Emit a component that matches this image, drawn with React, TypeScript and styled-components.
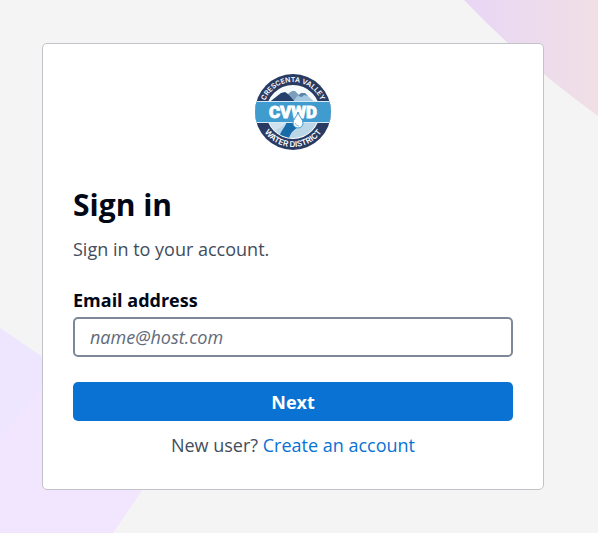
import React from "react";
import styled, { createGlobalStyle } from "styled-components";

const GlobalStyle = createGlobalStyle`
  *, *::before, *::after { box-sizing: border-box; }
  body {
    margin: 0;
    background: #f4f4f4;
    color: #414d5c;
    font-family: "Open Sans", "Noto Sans", sans-serif;
    font-size: 18px;
    line-height: 25px;
  }
`;

const Page = styled.div`
  position: relative;
  display: flex;
  justify-content: center;
  align-items: flex-start;
  min-height: 100vh;
  padding: 43px 54px 43px 42px;
  overflow: hidden;
`;

const Backdrop = styled.svg`
  position: absolute;
  inset: 0;
  width: 100%;
  height: 100%;
`;

const Card = styled.main`
  position: relative;
  width: 100%;
  max-width: 502px;
  padding: 30px 30px 31px;
  background: #ffffff;
  border: 1px solid #c1c3c8;
  border-radius: 5px;
`;

const LogoRow = styled.div`
  display: flex;
  justify-content: center;
  margin-bottom: 35px;
`;

const LogoSvg = styled.svg`
  display: block;
  width: 76px;
  height: 76px;
`;

const Title = styled.h1`
  margin: 0 0 12px;
  color: #000716;
  font-size: 30px;
  font-weight: 700;
  line-height: 40px;
`;

const Description = styled.p`
  margin: 0;
`;

const Form = styled.form`
  display: flex;
  flex-direction: column;
  margin-top: 26px;
`;

const Label = styled.label`
  color: #000716;
  font-weight: 700;
  margin-bottom: 4px;
`;

const TextField = styled.input`
  width: 100%;
  height: 40px;
  padding: 0 15px;
  border: 2px solid #7d8998;
  border-radius: 5px;
  background: #ffffff;
  color: #000716;
  font: inherit;

  &::placeholder {
    color: #5f6b7a;
    font-style: italic;
    opacity: 1;
  }
`;

const SubmitButton = styled.button`
  height: 39px;
  margin-top: 25px;
  padding: 2px 0 0;
  border: 0;
  border-radius: 5px;
  background: #0972d3;
  color: #ffffff;
  font: inherit;
  font-weight: 700;
  cursor: pointer;
`;

const Footer = styled.p`
  margin: 12px 0 0;
  text-align: center;
`;

const Link = styled.a`
  color: #0972d3;
  text-decoration: none;
`;

function Shapes() {
  return (
    <Backdrop viewBox="0 0 598 533" preserveAspectRatio="none" aria-hidden="true">
      <defs>
        <linearGradient id="blush" gradientUnits="userSpaceOnUse" x1="464" y1="0" x2="598" y2="0">
          <stop offset="0" stopColor="#e9d6f6" />
          <stop offset="0.5" stopColor="#ecdbed" />
          <stop offset="1" stopColor="#f1dfe5" />
        </linearGradient>
      </defs>
      <path d="M464 0Q522 61 598 116V0Z" fill="url(#blush)" />
      <path d="M0 328L190 459V420L113 533H0Z" fill="#f1e6fe" />
      <path d="M0 328L58 368L0 438Z" fill="#eee6fe" />
    </Backdrop>
  );
}

function Logo() {
  return (
    <LogoSvg viewBox="0 0 76 76" role="img" aria-label="Crescenta Valley Water District">
      <defs>
        <clipPath id="seal"><circle cx="38" cy="38" r="38" /></clipPath>
        <clipPath id="scene"><circle cx="38" cy="38" r="26" /></clipPath>
        <path id="upperArc" d="M8 38A30 30 0 0 1 68 38" />
        <path id="lowerArc" d="M3 38A35 35 0 0 0 73 38" />
      </defs>
      <circle cx="38" cy="38" r="38" fill="#293a63" />
      <circle cx="38" cy="38" r="27" fill="#ffffff" />
      <g clipPath="url(#scene)">
        <path d="M10 10H66V30H10Z" fill="#f6fafc" />
        <path d="M26 30L34 19L37 17L40 17L44 21L52 30Z" fill="#7d9dbd" />
        <path d="M36 30L44 20L49 19L53 22L62 30Z" fill="#a5c9e0" />
        <path d="M43 22L46 19L50 19L53 22L49 21L47 23Z" fill="#5d83aa" />
        <path d="M12 30L26 19L30 18L33 20L42 30Z" fill="#263f6b" />
      </g>
      <g clipPath="url(#scene)">
        <path d="M10 46H66V66H10Z" fill="#bad6e7" />
        <path d="M12 46H31C33 51 26 52 20 57Z" fill="#cfe2ee" />
        <path d="M31 46H47C47 54 36 54 34 65H24C25 55 33 52 31 46Z" fill="#176ba8" />
      </g>
      <g clipPath="url(#seal)">
        <path d="M0 27H76V49H0Z" fill="#d7eaf5" />
        <path d="M0 28H76V48H0Z" fill="#409bce" />
      </g>
      <g fill="#ffffff">
        <g fontFamily="Inter, sans-serif" fontWeight="600" textAnchor="middle">
          <text fontSize="7">
            <textPath href="#upperArc" startOffset="50%">CRESCENTA VALLEY</textPath>
          </text>
          <text fontSize="8">
            <textPath href="#lowerArc" startOffset="50%">WATER DISTRICT</textPath>
          </text>
        </g>
        <text
          x="38"
          y="44"
          fontFamily="Roboto, sans-serif"
          fontSize="17"
          fontWeight="900"
          textAnchor="middle"
          stroke="#ffffff"
          strokeWidth="0.8"
        >
          CVWD
        </text>
      </g>
      <path
        d="M43 38C42 43 38 45 38 49A5 5 0 0 0 48 49C48 45 44 43 43 38Z"
        fill="#ffffff"
        stroke="#409bce"
        strokeWidth="1"
      />
      <path d="M40 49Q41 52 44 52" fill="none" stroke="#8bbedd" strokeWidth="1" />
    </LogoSvg>
  );
}

export default function App() {
  return (
    <>
      <GlobalStyle />
      <Page>
        <Shapes />
        <Card>
          <LogoRow>
            <Logo />
          </LogoRow>
          <Title>Sign in</Title>
          <Description>Sign in to your account.</Description>
          <Form onSubmit={(event: React.FormEvent) => event.preventDefault()}>
            <Label htmlFor="email">Email address</Label>
            <TextField id="email" type="email" placeholder="name@host.com" autoComplete="email" />
            <SubmitButton type="submit">Next</SubmitButton>
          </Form>
          <Footer>
            New user? <Link href="#create-account">Create an account</Link>
          </Footer>
        </Card>
      </Page>
    </>
  );
}
